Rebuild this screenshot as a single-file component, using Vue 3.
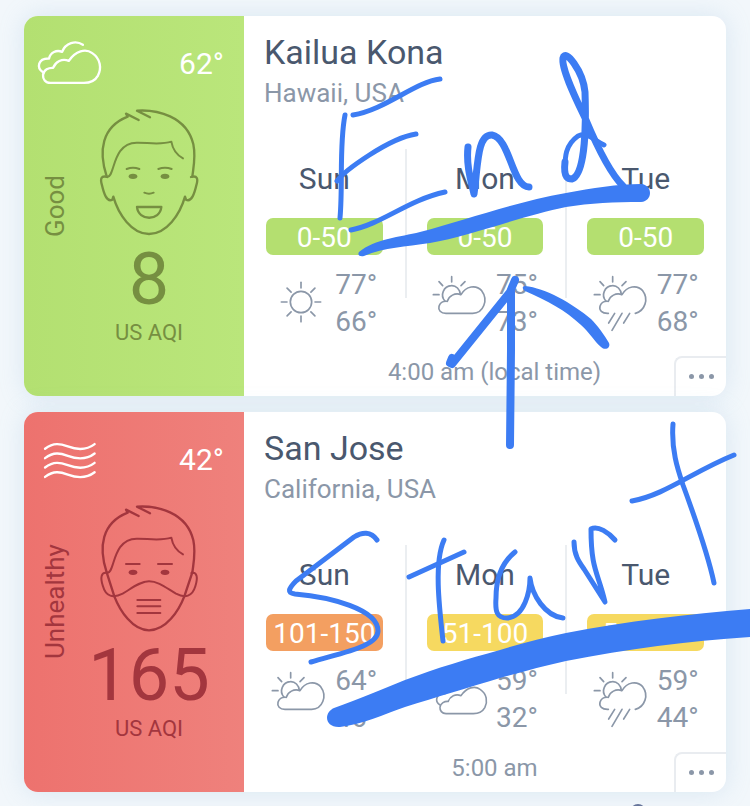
<script setup>
const places = [
  {
    id: 'kona',
    city: 'Kailua Kona',
    region: 'Hawaii, USA',
    level: 'Good',
    tone: 'good',
    sky: 'clouds',
    temp: '62°',
    aqi: 8,
    time: '4:00 am (local time)',
    days: [
      { name: 'Sun', range: '0-50', tone: 'green', icon: 'sun', high: '77°', low: '66°' },
      { name: 'Mon', range: '0-50', tone: 'green', icon: 'partly', high: '75°', low: '73°' },
      { name: 'Tue', range: '0-50', tone: 'green', icon: 'rain', high: '77°', low: '68°' }
    ]
  },
  {
    id: 'sanjose',
    city: 'San Jose',
    region: 'California, USA',
    level: 'Unhealthy',
    tone: 'unhealthy',
    sky: 'wind',
    temp: '42°',
    aqi: 165,
    time: '5:00 am',
    days: [
      { name: 'Sun', range: '101-150', tone: 'orange', icon: 'partly', high: '64°', low: '46°' },
      { name: 'Mon', range: '51-100', tone: 'yellow', icon: 'clouds', high: '59°', low: '32°' },
      { name: 'Tue', range: '51-100', tone: 'yellow', icon: 'rain', high: '59°', low: '44°' }
    ]
  }
]

const frontCloud = 'M150 244C135 244 127 232 128 220C130 205 145 198 158 199C165 180 185 170 205 178C225 148 255 140 275 155C300 172 303 200 292 222C283 238 268 244 250 244Z'
const backCloud = 'M128 212C108 200 112 170 146 171C150 152 168 145 185 151C195 125 225 115 247 130'
const rays = [0, 45, 90, 135, 180, 225, 270, 315]
</script>

<template>
  <main class="page">
    <article v-for="place in places" :key="place.id" class="card">
      <section class="aqi" :class="place.tone">
        <header class="now">
          <svg v-if="place.sky === 'clouds'" class="sky" viewBox="110 116 194 134" aria-hidden="true">
            <path :d="frontCloud" />
            <path :d="backCloud" />
          </svg>
          <svg v-else class="sky" viewBox="110 14 194 134" aria-hidden="true">
            <path v-for="n in 4" :key="n" d="M134 24C160 4 180 9 202 17C228 27 256 30 282 10" :transform="`translate(0 ${n * 28})`" />
          </svg>
          <span class="temp">{{ place.temp }}</span>
        </header>
        <div class="reading">
          <span class="level">{{ place.level }}</span>
          <div class="score">
            <svg class="face" viewBox="300 324 297 381" aria-hidden="true">
              <path d="M320 526C295 450 305 378 383 347L378 338L416 357" />
              <path d="M450 349L411 329C470 325 560 345 580 430C588 468 580 500 577 527" />
              <path class="fine" d="M320 527C346 535 333 426 410 425C440 424 480 433 514 422C518 445 530 462 549 472" />
              <g v-if="place.tone === 'good'">
                <path d="M322 528C303 522 300 534 306 553C311 575 320 605 337 596L340 587C355 640 395 699 447 699C500 699 540 640 555 587L558 596C575 605 584 575 589 553C595 534 592 522 573 528" />
                <path class="fine" d="M380 504Q399 496 418 504M475 504Q495 496 515 504M433 575Q447 581 461 575" />
                <path d="M411 618H484C480 661 415 661 411 618Z" />
              </g>
              <g v-else>
                <path d="M320 526L343 598C360 642 398 700 447 700C498 700 536 642 553 598L577 526" />
                <path class="fine" d="M322 528C303 524 300 542 309 568C317 599 340 604 368 590C395 574 420 553 447 553C476 553 500 574 528 590C555 604 577 599 586 568C594 542 592 524 574 528" />
                <path class="fine" d="M378 501H419M474 501H516M412 609H481M412 628H481M412 648H481" />
              </g>
              <ellipse cx="399" cy="526" rx="13" ry="8" />
              <ellipse cx="495" cy="526" rx="13" ry="8" />
            </svg>
            <strong class="value">{{ place.aqi }}</strong>
            <span class="unit">US AQI</span>
          </div>
        </div>
      </section>

      <section class="info">
        <h2 class="city">{{ place.city }}</h2>
        <p class="region">{{ place.region }}</p>
        <ul class="days">
          <li v-for="day in place.days" :key="day.name" class="day">
            <h3 class="name">{{ day.name }}</h3>
            <span class="badge" :class="day.tone">{{ day.range }}</span>
            <div class="weather">
              <svg v-if="day.icon === 'sun'" class="icon" viewBox="63 72 162 180" aria-hidden="true">
                <circle cx="153" cy="156" r="32" />
                <path v-for="a in rays" :key="a" d="M153 114V97" :transform="`rotate(${a} 153 156)`" />
              </svg>
              <svg v-else-if="day.icon === 'clouds'" class="icon" viewBox="546 72 162 180" aria-hidden="true">
                <g class="scaled" transform="translate(465 3) scale(.82)">
                  <path :d="frontCloud" />
                  <path :d="backCloud" />
                </g>
              </svg>
              <svg v-else class="icon" viewBox="546 72 162 180" aria-hidden="true">
                <path d="M605 80V96M550 134H567M567 95L578 107M645 95L633 107" />
                <path d="M585 153C569 136 581 108 604 107C618 106 630 118 631 133" />
                <path v-if="day.icon === 'partly'" d="M588 190C572 190 564 180 567 169C570 158 580 153 592 154C596 138 615 127 633 134C648 108 678 103 695 122C716 150 700 190 668 190Z" />
                <template v-else>
                  <path d="M592 190C572 191 564 180 567 169C570 158 580 153 592 154C596 138 615 127 633 134C648 108 678 103 695 122C714 147 702 182 673 190" />
                  <path d="M611 190L593 219M633 190L603 241M656 190L638 219" />
                </template>
              </svg>
              <div class="range">
                <span>{{ day.high }}</span>
                <span>{{ day.low }}</span>
              </div>
            </div>
          </li>
        </ul>
        <footer class="foot">
          <span class="time">{{ place.time }}</span>
          <button class="more" type="button" aria-label="More options">
            <i></i><i></i><i></i>
          </button>
        </footer>
      </section>
    </article>

    <span class="peek"></span>

    <!-- Handwritten notes laid over the cards -->
    <svg class="ink" viewBox="0 0 750 806" preserveAspectRatio="xMinYMin meet" aria-hidden="true">
      <g class="w5">
        <path d="M345 115C339 145 343 185 340 218" />
        <path d="M353 115C385 110 415 82 440 79" />
        <path d="M337 181C344 171 389 138 416 134" />
        <path d="M351 230C382 224 408 200 445 192" />
        <path d="M377 540C371 531 362 532 354 537L296 581C288 589 287 593 295 594C330 597 378 609 378 631C378 646 345 652 311 662" />
        <path d="M444 540C434 562 439 605 443 641" />
        <path d="M409 577L464 552" />
        <path d="M515 552C500 564 496 580 496 598C495 612 497 618 507 618C525 617 530 590 530 578C532 595 545 616 563 618" />
        <path d="M574 542C574 555 579 562 584 569L605 602C598 572 591 570 591 529C598 525 609 533 615 540" />
        <path d="M673 424C671 450 678 470 683 485C694 515 708 554 714 583" />
        <path d="M632 501C665 495 692 472 734 455" />
      </g>
      <g class="w6">
        <path d="M468 147C466 165 471 181 474 194C478 166 477 134 492 135C510 138 512 187 529 187" />
        <path class="thin" d="M604 145C592 139 588 132 578 136C565 145 565 158 565 168" />
        <path d="M565 162C563 179 569 179 572 179C586 174 586 120 585 92C583 71 565 48 563 58C561 69 577 101 586 120C596 144 609 172 623 186" />
      </g>
      <g class="w8">
        <path d="M511 292L511 350L510 445" />
        <path d="M515 280L510 292L452 364" />
        <path d="M450 363L452 358" />
      </g>
      <path class="fill" d="M525 286C545 288 572 303 591 319C598 326 605 336 609 343C611 348 605 351 601 347C594 341 590 333 581 325C565 310 548 301 525 291C522 289 522 286 525 286Z" />
      <path class="fill" d="M359 252C375 239 400 237 420 232C465 220 515 202 566 193C592 188 618 184 641 184C653 185 653 201 641 202C615 202 590 203 566 207C525 215 470 236 430 243C405 247 385 247 364 256C360 257 357 255 359 252Z" />
      <path class="fill" d="M334 708C360 699 382 689 405 680C437 668 467 659 500 650C522 643 543 638 566 633C627 621 688 614 750 609V637C688 641 627 649 566 661C543 666 522 672 500 678C467 688 437 697 405 707C385 714 360 725 340 727C325 728 323 713 334 708Z" />
    </svg>
  </main>
</template>

<style>
body {
  margin: 0;
  background: #f2f7fb;
}
</style>

<style scoped>
.page {
  position: relative;
  display: flex;
  flex-direction: column;
  gap: 16px;
  box-sizing: border-box;
  min-height: 100vh;
  padding: 16px 24px 14px;
  overflow: hidden;
  background: #f2f7fb;
  color: #8b97a8;
  font-family: Roboto, "Liberation Sans", sans-serif;
}
.card {
  display: grid;
  grid-template-columns: 220px 1fr;
  min-height: 380px;
  border-radius: 14px;
  background: #fff;
  box-shadow: 0 0 24px rgba(150, 190, 220, 0.28);
}
svg {
  display: block;
  overflow: visible;
  fill: none;
  stroke: currentColor;
  stroke-linecap: round;
  stroke-linejoin: round;
}

.aqi {
  display: flex;
  flex-direction: column;
  border-radius: 14px 0 0 14px;
}
.aqi.good {
  background: linear-gradient(90deg, #b3e071, #bae67b);
  color: #768f41;
}
.aqi.unhealthy {
  background: linear-gradient(90deg, #ed726e, #ef817c);
  color: #a3363e;
}
.now {
  display: flex;
  justify-content: space-between;
  align-items: flex-start;
  padding: 24px 20px 0 13px;
  color: #fff;
}
.sky {
  width: 65px;
  height: 45px;
  stroke-width: 7;
}
.temp {
  margin-top: 6px;
  font-size: 30px;
  line-height: 36px;
}
.reading {
  flex: 1;
  display: grid;
  grid-template-columns: 62px 1fr;
  padding-right: 32px;
}
.level {
  padding-top: 69px;
  font-size: 26px;
  line-height: 62px;
  text-align: center;
  writing-mode: vertical-rl;
  transform: rotate(180deg);
}
.score {
  display: flex;
  flex-direction: column;
  align-items: center;
  padding-top: 24px;
}
.face {
  width: 99px;
  height: 127px;
  stroke-width: 7;
}
.face .fine {
  stroke-width: 6;
}
.face ellipse {
  fill: currentColor;
  stroke: none;
}
.value {
  margin-top: 3px;
  font-size: 72px;
  font-weight: 400;
  line-height: 82px;
}
.unit {
  font-size: 22px;
  line-height: 24px;
}

.info {
  display: flex;
  flex-direction: column;
  min-width: 0;
}
.city,
.region {
  margin: 0;
  padding-left: 20px;
  font-weight: 400;
}
.city {
  padding-top: 15px;
  color: #4a586e;
  font-size: 34px;
  line-height: 42px;
}
.region {
  font-size: 26px;
  line-height: 40px;
}
.days {
  display: grid;
  grid-template-columns: repeat(3, 1fr);
  margin: 36px 0 0;
  padding: 0;
  list-style: none;
}
.day {
  display: flex;
  flex-direction: column;
  padding: 10px 22px 0;
}
.day + .day {
  background: linear-gradient(#ebeef1, #ebeef1) left top / 2px 149px no-repeat;
}
.name {
  margin: 0;
  color: #4a586e;
  font-size: 30px;
  font-weight: 400;
  line-height: 40px;
  text-align: center;
}
.badge {
  margin-top: 19px;
  padding-top: 2px;
  border-radius: 7px;
  color: #fff;
  font-size: 28px;
  line-height: 35px;
  text-align: center;
}
.green {
  background: #b4df70;
}
.orange {
  background: #f39f61;
}
.yellow {
  background: #f6d960;
}
.weather {
  display: flex;
  justify-content: center;
  gap: 10px;
  margin-top: 11px;
}
.icon {
  flex: none;
  width: 54px;
  height: 60px;
  margin-top: 8px;
  stroke-width: 5;
}
.icon .scaled {
  stroke-width: 6;
}
.range {
  display: flex;
  flex-direction: column;
  font-size: 28px;
  line-height: 37px;
}
.foot {
  flex: 1;
  display: flex;
  align-items: flex-end;
}
.time {
  flex: 1;
  padding: 0 0 9px 71px;
  font-size: 24px;
  line-height: 30px;
  text-align: center;
}
.more {
  display: flex;
  justify-content: center;
  align-items: center;
  gap: 5px;
  box-sizing: border-box;
  width: 52px;
  height: 40px;
  padding: 0 0 2px;
  border: 2px solid #e9ecf0;
  border-width: 2px 0 0 2px;
  border-radius: 8px 0 14px 0;
  background: none;
  cursor: pointer;
}
.more i {
  width: 5px;
  height: 5px;
  border-radius: 50%;
  background: #8b97a8;
}

.peek {
  position: absolute;
  top: 804px;
  left: 630px;
  box-sizing: border-box;
  width: 16px;
  height: 16px;
  border: 2px solid #66759a;
  border-radius: 50%;
}
.ink {
  position: absolute;
  top: 0;
  left: 0;
  width: 100%;
  color: #3c7cf3;
  pointer-events: none;
}
.w5 {
  stroke-width: 5;
}
.w6 {
  stroke-width: 7;
}
.w6 .thin {
  stroke-width: 5;
}
.w8 {
  stroke-width: 8;
}
.ink .fill {
  fill: currentColor;
  stroke: none;
}
</style>
